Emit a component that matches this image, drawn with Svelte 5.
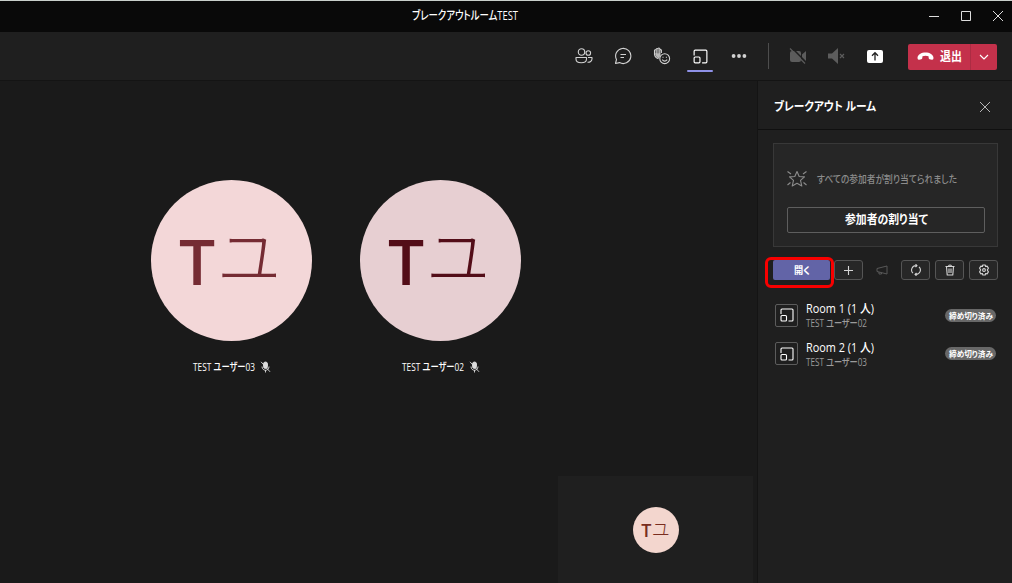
<script lang="ts">
    type Person = { name: string; tone: string };
    type Room = { name: string; member: string };

    const people: Person[] = [
        { name: "TEST ユーザー03", tone: "rose" },
        { name: "TEST ユーザー02", tone: "mauve" },
    ];

    const rooms: Room[] = [
        { name: "Room 1 (1 人)", member: "TEST ユーザー02" },
        { name: "Room 2 (1 人)", member: "TEST ユーザー03" },
    ];

    let selected = $state("rooms");
    const tools = ["people", "chat", "reactions", "rooms", "more"];
</script>

<!-- Single line of text, condensed to the given width -->
{#snippet label(text: string, width: number)}
    <svg class="label" {width} height="18">
        <text x="0" y="13" textLength={width} lengthAdjust="spacingAndGlyphs">{text}</text>
    </svg>
{/snippet}

{#snippet roomIcon(size: number)}
    <svg class="line" width={size} height={size} viewBox="0 0 16 16">
        <path d="M2 7V3Q2 2 3 2h10Q14 2 14 3v10q0 1-1 1H9.500" />
        <rect x="2" y="8.500" width="5.500" height="5.500" rx="1" />
    </svg>
{/snippet}

<div class="window">
    <header class="titlebar">
        <div class="title">{@render label("ブレークアウトルームTEST", 106)}</div>
        <svg class="controls" width="76" height="12" viewBox="0 0 76 12">
            <path d="M1 6.500h10M33.500 1.500h9v9h-9zM65 1l10 10M75 1L65 11" />
        </svg>
    </header>

    <nav class="toolbar">
        {#each tools as tool}
            <button
                class="tool"
                class:active={selected === tool}
                aria-label={tool}
                onclick={() => (selected = tool)}
            >
                {#if tool === "people"}
                    <svg class="line" width="18" height="18" viewBox="0 0 18 18">
                        <circle cx="6.500" cy="5" r="3.200" />
                        <circle cx="13.300" cy="6" r="2.300" />
                        <path d="M1 10.500h10.500v1.500c0 5-10.500 5-10.500 0zM13 10.500h4v1.300c0 2.500-2 3.700-4.500 3.500" />
                    </svg>
                {:else if tool === "chat"}
                    <svg class="line" width="18" height="18" viewBox="0 0 18 18">
                        <path d="M1.500 16.500l1-4A7.600 7.600 0 1 1 5.500 15.600zM6.500 7.500h5.500M6.500 10.500h3.500" />
                    </svg>
                {:else if tool === "reactions"}
                    <svg class="line" width="18" height="18" viewBox="0 0 18 18">
                        <path class="palm" d="M1.800 6.500h5.700V8L6 11.500 3.500 10z" />
                        <path d="M1.500 7.500V3.200q.9-1 1.700 0V2q.9-1 1.800 0v-.5q.9-1 1.800 0V3q.9-.8 1.600 0V6M3.200 3v4M5 2v5M6.800 3v4M1.500 7.500Q2 10.800 5.500 11.800" />
                        <circle cx="11.700" cy="11.700" r="4.900" />
                        <path d="M9.200 12.700q2.500 2.800 5 0M10 9.700v1M13.400 9.700v1" />
                    </svg>
                {:else if tool === "rooms"}
                    {@render roomIcon(17)}
                {:else}
                    <svg width="16" height="16" viewBox="0 0 16 16" fill="currentColor">
                        <circle cx="2.600" cy="8" r="1.900" />
                        <circle cx="8" cy="8" r="1.900" />
                        <circle cx="13.400" cy="8" r="1.900" />
                    </svg>
                {/if}
            </button>
        {/each}
        <div class="divider"></div>
        <button class="tool off" aria-label="camera">
            <svg width="18" height="18" viewBox="0 0 18 18" fill="currentColor">
                <rect x="1" y="4" width="11" height="11" rx="2" />
                <path d="M13 7.500L17 4v11l-4-3.500z" />
                <path class="gap" d="M2.500.500l15 15" />
                <path class="slash" d="M1 1.500l15 15" />
            </svg>
        </button>
        <button class="tool off" aria-label="speaker">
            <svg width="18" height="18" viewBox="0 0 18 18" fill="currentColor">
                <path d="M1 6.500h4L11 1v16l-6-5.500H1z" />
                <path class="slash" d="M13 7l4 4M17 7l-4 4" />
            </svg>
        </button>
        <button class="tool share" aria-label="share">
            <svg width="16" height="13" viewBox="0 0 16 13">
                <rect width="16" height="13" rx="2" fill="#fff" />
                <path d="M8 10.500V3M5 5.700l3-3 3 3" />
            </svg>
        </button>
        <div class="leave">
            <button class="hangup">
                <svg width="17" height="9" viewBox="0 0 17 9" fill="currentColor">
                    <path d="M.5 6C.5-1.500 16.500-1.500 16.500 6q0 2-1.500 1.800l-2.400-.5Q11.700 7 11.700 6L11.500 4.200Q8.500 3.200 5.500 4.200L5.300 6q0 1-1 1.300L2 7.800Q.5 8 .5 6z" />
                </svg>
                {@render label("退出", 22)}
            </button>
            <button class="caret" aria-label="leave options">
                <svg class="line" width="10" height="6" viewBox="0 0 10 6"><path d="M1 1l4 4 4-4" /></svg>
            </button>
        </div>
    </nav>

    <div class="body">
        <main class="stage">
            <div class="people">
                {#each people as person}
                    <figure>
                        <div class="avatar {person.tone}">
                            <span class="latin">T</span><span class="kana">ユ</span>
                        </div>
                        <figcaption>
                            {@render label(person.name, 62)}
                            <svg class="mic" width="11" height="12" viewBox="0 0 11 12">
                                <rect x="3.500" y="1" width="4" height="6.500" rx="2" />
                                <path d="M2 5.500c0 5 7 5 7 0M5.500 9v2.500M1 .8l9 10" />
                            </svg>
                        </figcaption>
                    </figure>
                {/each}
            </div>
            <div class="self">
                <div class="avatar small">
                    <span class="latin">T</span><span class="kana">ユ</span>
                </div>
            </div>
        </main>

        <aside class="panel">
            <div class="panel-head">
                {@render label("ブレークアウト ルーム", 102)}
                <svg class="close" width="10" height="10" viewBox="0 0 10 10"><path d="M0 0l10 10M10 0L0 10" /></svg>
            </div>

            <section class="card">
                <div class="notice">
                    <svg class="line" width="20" height="18" viewBox="0 0 20 18">
                        <path d="M10 1.500l2.200 5 5.300.4-4 3.500 1.300 5.600L10 13.200 5.200 16l1.300-5.600-4-3.500 5.300-.4zM.5 1.500L4 4M19.500 1.500L16 4M.5 15l3-2.500M19.500 15l-3-2.500" />
                    </svg>
                    {@render label("すべての参加者が割り当てられました", 140)}
                </div>
                <button class="assign">{@render label("参加者の割り当て", 83)}</button>
            </section>

            <div class="actions">
                <button class="open">{@render label("開く", 16)}<span class="highlight"></span></button>
                <button class="action" aria-label="add">
                    <svg class="line" width="9" height="9" viewBox="0 0 9 9"><path d="M4.500 0v9M0 4.500h9" /></svg>
                </button>
                <svg class="megaphone" width="12" height="10" viewBox="0 0 12 10">
                    <path d="M11 1v8L1 6.500v-3zM3 7v2h2.500V7.700" />
                </svg>
                <button class="action" aria-label="reset">
                    <svg class="line" width="12" height="12" viewBox="0 0 12 12">
                        <path d="M6.800 1.600H6A4.400 4.400 0 0 0 3 9.200M5.200 10.400H6A4.400 4.400 0 0 0 9 2.800M5.500.2L7 1.600 5.500 3M6.500 9L5 10.400l1.500 1.400" />
                    </svg>
                </button>
                <button class="action" aria-label="delete">
                    <svg class="line" width="12" height="12" viewBox="0 0 12 12">
                        <path d="M1.500 2.500h9M4.500 2.500Q4.500 1 6 1t1.500 1.500M2.500 2.500l.7 8.500h5.600l.7-8.500M5 4.500v4.500M7 4.500v4.500" />
                    </svg>
                </button>
                <button class="action" aria-label="settings">
                    <svg class="line" width="12" height="12" viewBox="0 0 12 12">
                        <path d="M4.800 1h2.400l.4 1.500 1.500-.4 1.300 2L9.300 6l1.100 1.900-1.300 2-1.500-.4-.4 1.500H4.800l-.4-1.500-1.500.4-1.300-2L2.700 6 1.600 4.100l1.300-2 1.500.4z" />
                        <circle cx="6" cy="6" r="1.400" />
                    </svg>
                </button>
            </div>

            <ul class="rooms">
                {#each rooms as room}
                    <li>
                        <div class="room-icon">{@render roomIcon(16)}</div>
                        <div class="room-text">
                            <div class="room-name">{@render label(room.name, 68)}</div>
                            <div class="room-member">{@render label(room.member, 61)}</div>
                        </div>
                        <div class="badge">{@render label("締め切り済み", 44)}</div>
                    </li>
                {/each}
            </ul>
        </aside>
    </div>
</div>

<style>
    :global(body) {
        background: #1a1a1a;
    }

    .window {
        width: 1012px;
        height: 583px;
        display: flex;
        flex-direction: column;
        overflow: hidden;
        box-sizing: border-box;
        border-top: 1px solid #c9cfcb;
        background: #1a1a1a;
        color: #fff;
        font-family: "Open Sans", "Noto Sans CJK JP", sans-serif;
        font-size: 11px;
        font-weight: 500;
    }

    button {
        display: flex;
        align-items: center;
        justify-content: center;
        box-sizing: border-box;
        padding: 0;
        border: none;
        background: none;
        color: inherit;
        font: inherit;
    }

    svg {
        display: block;
        flex: none;
    }

    .label {
        overflow: visible;
        fill: currentColor;
        font-feature-settings: "palt";
    }

    .line {
        fill: none;
        stroke: currentColor;
        stroke-width: 1.1;
        stroke-linejoin: round;
    }

    .titlebar {
        height: 31px;
        flex: none;
        box-sizing: border-box;
        display: flex;
        align-items: center;
        justify-content: space-between;
        padding: 0 8px 1px 412px;
        background: #090909;
    }

    .title {
        font-size: 12px;
    }

    .controls {
        fill: none;
        stroke: #ddd;
    }

    .toolbar {
        height: 49px;
        flex: none;
        box-sizing: border-box;
        display: flex;
        align-items: center;
        padding: 0 15px 0 565px;
        background: #1f1f1f;
        border-bottom: 1px solid #141414;
    }

    .tool {
        width: 38.7px;
        height: 34px;
        position: relative;
        color: #d2d2d2;
    }

    .tool.active {
        color: #fff;
    }

    .tool.active::after {
        content: "";
        position: absolute;
        bottom: 1px;
        width: 26px;
        height: 2px;
        border-radius: 1px;
        background: #8f92e8;
    }

    .palm {
        fill: #b9b9b9;
        stroke: none;
    }

    .divider {
        width: 1px;
        height: 26px;
        margin: 0 9.5px 0 9.5px;
        background: #4d4d4d;
    }

    .off {
        color: #5c5c5c;
    }

    .slash {
        fill: none;
        stroke: currentColor;
        stroke-width: 1.2;
    }

    .gap {
        stroke: #1f1f1f;
        stroke-width: 1.5;
    }

    .share path {
        fill: none;
        stroke: #222;
        stroke-width: 1.3;
    }

    .leave {
        width: 89px;
        height: 26px;
        margin: 1px 0 0 auto;
        display: flex;
        border-radius: 2px;
        background: #c4314b;
        font-size: 12px;
        font-weight: 700;
    }

    .hangup {
        width: 63px;
        gap: 6px;
        border-right: 1px solid #ac2c43;
    }

    .caret {
        flex: 1;
    }

    .body {
        flex: 1;
        display: flex;
        min-height: 0;
    }

    .stage {
        width: 757px;
        display: flex;
        flex-direction: column;
        justify-content: space-between;
    }

    .people {
        display: flex;
        gap: 48px;
        padding: 99px 0 0 151px;
    }

    figure {
        margin: 0;
        display: flex;
        flex-direction: column;
        align-items: center;
        gap: 17px;
    }

    figcaption {
        display: flex;
        align-items: center;
        gap: 5px;
    }

    .avatar {
        width: 161px;
        height: 161px;
        box-sizing: border-box;
        padding-right: 3px;
        border-radius: 50%;
        display: flex;
        align-items: center;
        justify-content: center;
        gap: 0.03em;
        font-size: 64px;
        line-height: 1;
    }

    .latin {
        font-weight: 600;
    }

    .kana {
        padding-bottom: 0.25em;
        font-family: "Noto Sans CJK JP", sans-serif;
        font-weight: 300;
    }

    .rose {
        background: #f3d7d8;
        color: #752b33;
    }

    .mauve {
        background: #e7cfd2;
        color: #530d18;
    }

    .mic {
        fill: #ddd;
        stroke: #ddd;
        stroke-width: 0.9;
    }

    .mic path {
        fill: none;
    }

    .self {
        width: 195px;
        height: 107px;
        box-sizing: border-box;
        margin-left: 558px;
        padding-top: 31px;
        display: flex;
        justify-content: center;
        background: #1f1f1f;
    }

    .avatar.small {
        width: 46px;
        height: 46px;
        padding: 0;
        background: #f3d6ce;
        color: #792d1e;
        font-size: 18px;
    }

    .panel {
        width: 255px;
        box-sizing: border-box;
        border-left: 1px solid #141414;
        background: #1f1f1f;
    }

    .panel-head {
        height: 49px;
        box-sizing: border-box;
        display: flex;
        align-items: center;
        justify-content: space-between;
        padding: 3px 22px 0 16px;
        border-bottom: 1px solid #101010;
        font-size: 12px;
        font-weight: 700;
    }

    .close {
        fill: none;
        stroke: #b5b5b5;
    }

    .card {
        height: 104px;
        box-sizing: border-box;
        margin: 13px 14px 0 15px;
        padding: 26px 13px 0;
        border: 1px solid #383838;
        background: #262626;
    }

    .notice {
        display: flex;
        align-items: center;
        gap: 10px;
        color: #8c8c8c;
        font-size: 10px;
    }

    .assign {
        width: 198px;
        height: 26px;
        margin-top: 19px;
        border: 1px solid #5e5e5e;
        border-radius: 2px;
        font-size: 12px;
        font-weight: 700;
    }

    .actions {
        display: flex;
        align-items: center;
        margin: 13px 14px 0 15px;
    }

    .open {
        position: relative;
        width: 57px;
        height: 20px;
        margin-right: 4px;
        border-radius: 2px;
        background: #6264a7;
        font-size: 10px;
        font-weight: 700;
    }

    .highlight {
        position: absolute;
        left: -8px;
        top: -3px;
        width: 63px;
        height: 25px;
        border: 3px solid #f80000;
        border-radius: 6px;
    }

    .action {
        width: 29px;
        height: 20px;
        border: 1px solid #555;
        border-radius: 3px;
        background: #272727;
        color: #d5d5d5;
    }

    .action + .action {
        margin-left: 5px;
    }

    .megaphone {
        margin: 0 13px 0 auto;
        fill: none;
        stroke: #585858;
    }

    .rooms {
        list-style: none;
        margin: 16px 16px 0 17px;
        padding: 0;
    }

    li {
        height: 38.5px;
        display: flex;
        align-items: center;
    }

    .room-icon {
        width: 21px;
        height: 21px;
        display: flex;
        align-items: center;
        justify-content: center;
        border: 1px solid #5c5c5c;
        border-radius: 2px;
    }

    .room-text {
        margin-left: 8px;
    }

    .room-name {
        height: 14px;
        font-size: 12px;
    }

    .room-member {
        height: 16px;
        color: #9b9b9b;
        font-size: 10.5px;
    }

    .badge {
        width: 51px;
        height: 13px;
        margin-left: auto;
        display: flex;
        align-items: center;
        justify-content: center;
        border-radius: 7px;
        background: #686868;
        font-size: 8px;
        font-weight: 700;
    }

    .badge .label {
        margin-top: -1px;
    }
</style>
